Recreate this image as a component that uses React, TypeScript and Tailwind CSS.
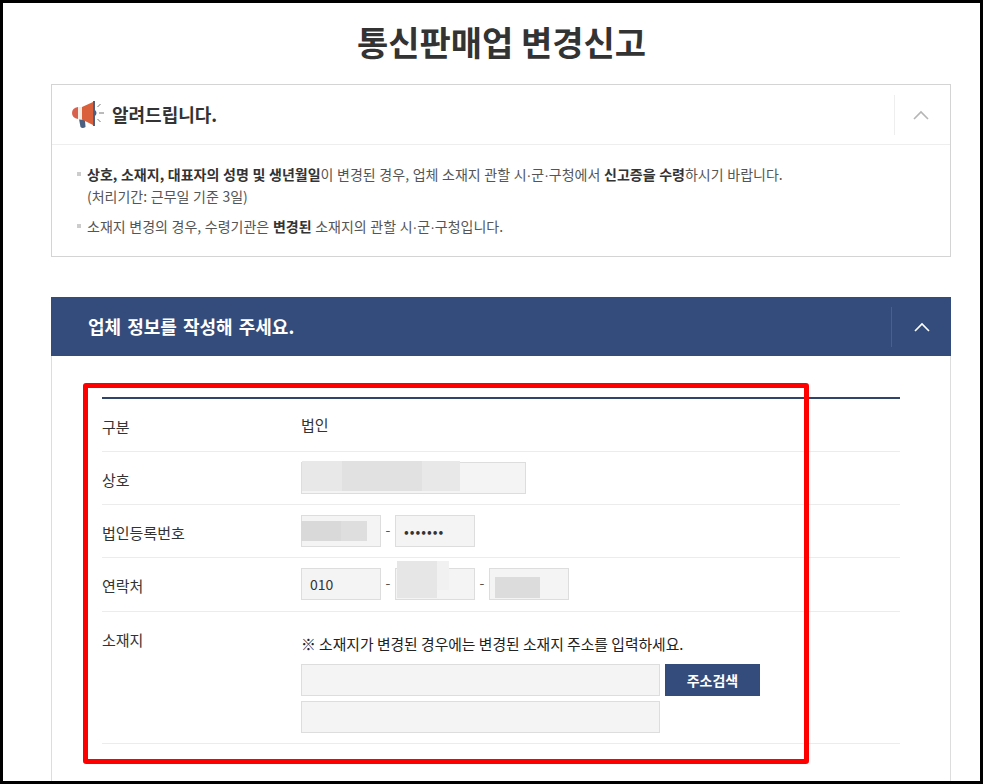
import React from 'react';

const FONT = "font-['Noto_Sans_CJK_KR','Noto_Sans',sans-serif]";
const INPUT = 'h-8 bg-[#f4f4f4] border border-[#dddddd] text-sm text-[#333] flex items-center px-2';

function Chevron({ color, width = 16 }: { color: string; width?: number }) {
  return (
    <svg width={width} height="10" viewBox="0 0 16 10" fill="none">
      <path d="M1 9 L8 2 L15 9" stroke={color} strokeWidth="1.6" />
    </svg>
  );
}

function Megaphone() {
  return (
    <svg width="33" height="28" viewBox="0 0 33 28" fill="none">
      <path d="M7 18 L13 19 L13.5 26 Q10.5 28 8.5 26 Z" fill="#4b5f80" />
      <path d="M6 6 L6 18 Q0 17 0 12 Q0 7 6 6 Z" fill="#d9604c" />
      <rect x="6" y="6" width="4" height="12.5" fill="#f5ece4" />
      <path d="M10 6 L21 1 L21 24 L10 18.5 Z" fill="#d9603a" />
      <path d="M21 0 L23 0 L23 25 L21 25 Z" fill="#4b5f80" />
      <path d="M23 9 L23 15 Q26 12 23 9 Z" fill="#4b5f80" />
      <path d="M25.5 6 L28.5 3 M27 12 L32 12 M25.5 18 L28.5 21" stroke="#777" strokeWidth="1" />
    </svg>
  );
}

function Row({ label, className, labelClass, children }: { label: string; className: string; labelClass?: string; children: React.ReactNode }) {
  return (
    <div className={`flex border-b border-[#ececec] ${className}`}>
      <div className={`w-[199px] shrink-0 text-[15px] text-[#333] ${labelClass ?? 'relative top-[2px]'}`}>{label}</div>
      <div className="flex-1">{children}</div>
    </div>
  );
}

function Dash() {
  return <span className="w-[14px] text-center text-sm text-[#555] -mt-1">-</span>;
}

// 가운뎃점은 폭이 좁은 글꼴로
function Dot() {
  return <span className="font-['Liberation_Sans']">·</span>;
}

function Blur({ className }: { className: string }) {
  return <div className={`absolute ${className}`} />;
}

export default function App() {
  return (
    <div className={`relative w-[983px] h-[784px] overflow-hidden bg-white border-[3px] border-black ${FONT}`}>
      <div className="px-[48px]">
        <h1 className="h-[81px] flex items-center justify-center text-[34px] font-bold text-[#333] pb-[4px] pl-[20px]">
          통신판매업 변경신고
        </h1>

        {/* 알려드립니다 */}
        <section className="w-[900px] h-[173px] border border-[#d4d4d4]">
          <div className="h-[60px] flex items-center border-b border-[#eeeeee]">
            <div className="flex-1 flex items-center pl-[20px] gap-[7px]">
              <Megaphone />
              <span className="text-[18px] font-bold text-[#333]">알려드립니다.</span>
            </div>
            <div className="w-[56px] h-[40px] border-l border-[#eeeeee] flex items-center justify-center pr-[4px]">
              <Chevron color="#b5b5b5" />
            </div>
          </div>
          <div className="pl-[25px] pt-[19px] text-[14px] leading-[21px] text-[#555] [word-spacing:0.5px]">
            <div className="relative pl-[10px]">
              <span className="absolute left-0 top-[8px] w-[4px] h-[4px] bg-[#cccccc]" />
              <b className="text-[#333]">상호, 소재지, 대표자의 성명 및 생년월일</b>이 변경된 경우, 업체 소재지 관할 시<Dot />군<Dot />구청에서{' '}
              <b className="text-[#333]">신고증을 수령</b>하시기 바랍니다.
              <br />
              (처리기간: 근무일 기준 3일)
            </div>
            <div className="relative pl-[10px] mt-[9px]">
              <span className="absolute left-0 top-[8px] w-[4px] h-[4px] bg-[#cccccc]" />
              소재지 변경의 경우, 수령기관은 <b className="text-[#333]">변경된</b> 소재지의 관할 시<Dot />군<Dot />구청입니다.
            </div>
          </div>
        </section>

        {/* 업체 정보 */}
        <section className="w-[900px] mt-[40px]">
          <div className="h-[59px] bg-[#344c7b] flex items-center">
            <div className="flex-1 pl-[37px] text-[18px] font-bold text-white [word-spacing:2px]">업체 정보를 작성해 주세요.</div>
            <div className="w-[60px] h-[40px] border-l border-[#47608c] flex items-center justify-center">
              <Chevron color="#ffffff" />
            </div>
          </div>
          <div className="border-x border-[#dddddd] px-[50px] pt-[41px] h-[500px]">
            <div className="border-t-2 border-[#2f4468]">
              <Row label="구분" className="h-[53px] items-center">
                <span className="text-[15px] text-[#333] relative -top-[1px]">법인</span>
              </Row>
              <Row label="상호" className="h-[53px] items-center">
                <div className={`${INPUT} w-[225px]`} />
              </Row>
              <Row label="법인등록번호" className="h-[53px] items-center">
                <div className="flex items-center">
                  <div className={`${INPUT} w-[80px]`} />
                  <Dash />
                  <div className={`${INPUT} w-[80px] text-[#111] tracking-[1px]`}>•••••••</div>
                </div>
              </Row>
              <Row label="연락처" className="h-[54px] items-center">
                <div className="flex items-center -mt-[1px]">
                  <div className={`${INPUT} w-[80px]`}>010</div>
                  <Dash />
                  <div className={`${INPUT} w-[80px]`} />
                  <Dash />
                  <div className={`${INPUT} w-[80px]`} />
                </div>
              </Row>
              <Row label="소재지" className="h-[132px] pt-[17px]" labelClass="leading-[22px]">
                <p className="text-[14.8px] leading-[22px] text-[#222] mt-[4px]">※ 소재지가 변경된 경우에는 변경된 소재지 주소를 입력하세요.</p>
                <div className="flex gap-[5px] mt-[9px]">
                  <div className={`${INPUT} w-[359px]`} />
                  <button className="w-[95px] h-8 bg-[#344c7b] text-white text-[14px] font-bold">주소검색</button>
                </div>
                <div className={`${INPUT} w-[359px] mt-[5px]`} />
              </Row>
            </div>
          </div>
        </section>
      </div>

      {/* 모자이크 처리 */}
      <Blur className="left-[299px] top-[458px] w-[40px] h-[30px] bg-[#e8e8e8]" />
      <Blur className="left-[339px] top-[458px] w-[80px] h-[30px] bg-[#e1e1e1]" />
      <Blur className="left-[419px] top-[458px] w-[38px] h-[30px] bg-[#e8e8e8]" />
      <Blur className="left-[298px] top-[518px] w-[40px] h-[20px] bg-[#d9d9d9]" />
      <Blur className="left-[338px] top-[518px] w-[26px] h-[20px] bg-[#dedede]" />
      <Blur className="left-[394px] top-[558px] w-[40px] h-[37px] bg-[#e6e6e6]" />
      <Blur className="left-[434px] top-[558px] w-[12px] h-[29px] bg-[#f1f1f1]" />
      <Blur className="left-[492px] top-[574px] w-[45px] h-[21px] bg-[#dcdcdc]" />

      {/* 빨간 강조 박스 */}
      <div className="absolute left-[80px] top-[380px] w-[726px] h-[381px] border-[5px] border-[#ff0000] rounded-[3px] pointer-events-none" />
    </div>
  );
}
